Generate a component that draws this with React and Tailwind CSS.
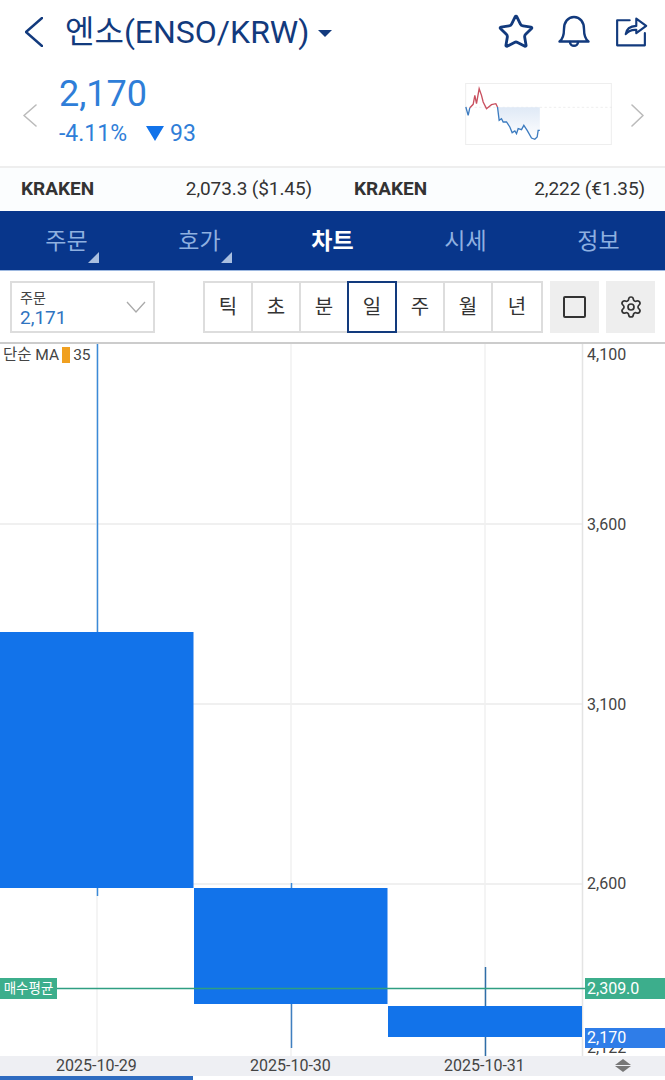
import { Settings, Star } from 'lucide-react';

const tabs = [
  { label: '주문', corner: true },
  { label: '호가', corner: true },
  { label: '차트', active: true },
  { label: '시세' },
  { label: '정보' },
];

const periods = ['틱', '초', '분', '일', '주', '월', '년'];

const yLabels = [
  { label: '4,100', cls: 'top-[2px]' },
  { label: '3,600', cls: 'top-[172px]' },
  { label: '3,100', cls: 'top-[352px]' },
  { label: '2,600', cls: 'top-[531px]' },
];

function Chevron({ dir, width, height, color, stroke }) {
  const points = dir === 'left'
    ? `${width - 1},1 1,${height / 2} ${width - 1},${height - 1}`
    : `1,1 ${width - 1},${height / 2} 1,${height - 1}`;
  return (
    <svg width={width} height={height} viewBox={`0 0 ${width} ${height}`} fill="none" stroke={color} strokeWidth={stroke} strokeLinecap="round" strokeLinejoin="round" className="shrink-0">
      <polyline points={points} />
    </svg>
  );
}

function Bell() {
  return (
    <svg width="34" height="34" viewBox="0 0 34 34" fill="none" stroke="#123a7d" strokeWidth="2.4" strokeLinejoin="round" strokeLinecap="round">
      <path d="M2.5 26.5C6 24 7 20 7 14C7 7 11 2 17 2C23 2 27 7 27 14C27 20 28 24 31.5 26.5Z" />
      <path d="M13 27C13 32 21 32 21 27" />
    </svg>
  );
}

function Share() {
  return (
    <svg width="35" height="33" viewBox="525 40 105 100" fill="none" stroke="#123a7d" strokeWidth="6.5" strokeLinejoin="round" strokeLinecap="round">
      <path d="M572 53H534V129H618V92" />
      <path d="M560 95C562 80 575 71 592 70V48L622 70L592 92V82C580 81 568 85 560 95Z" />
    </svg>
  );
}

function Sparkline() {
  return (
    <svg width="147" height="62" viewBox="76 248 440 186" className="mt-[-3px]">
      <defs>
        <linearGradient id="spark" x1="0" y1="0" x2="0" y2="1">
          <stop offset="0" stopColor="#dfe9f6" />
          <stop offset="1" stopColor="#ffffff" />
        </linearGradient>
      </defs>
      <rect x="77.5" y="249.5" width="437" height="183" fill="none" stroke="#eeeeee" strokeWidth="3" />
      <line x1="76" y1="321" x2="516" y2="321" stroke="#e6e6e6" strokeWidth="2" strokeDasharray="7 7" />
      <polygon fill="url(#spark)" points="173,321 178,360 185,355 190,365 200,365 210,380 217,397 225,392 230,400 235,385 245,388 252,375 262,390 275,413 285,417 292,410 295,390 300,390 300,321" />
      <polyline fill="none" stroke="#3d7cc0" strokeWidth="4" points="78,320 85,345 90,322" />
      <polyline fill="none" stroke="#c9505f" strokeWidth="4" points="90,322 100,312 105,285 110,310 118,265 125,285 130,305 140,325 155,313 168,310 173,320" />
      <polyline fill="none" stroke="#3d7cc0" strokeWidth="4" points="173,320 178,360 185,355 190,365 200,365 210,380 217,397 225,392 230,400 235,385 245,388 252,375 262,390 275,413 285,417 292,410 295,390 300,390" />
    </svg>
  );
}

function ChartCanvas() {
  // y here is screen y minus 344
  return (
    <svg width="665" height="712" viewBox="0 0 665 712" className="absolute inset-0">
      {[180, 360, 540].map((y) => (
        <line key={y} x1="0" y1={y} x2="582" y2={y} stroke="#f0f0f0" strokeWidth="2" />
      ))}
      {[97, 291, 485].map((x) => (
        <line key={x} x1={x} y1="0" x2={x} y2="712" stroke="#f0f0f0" strokeWidth="1.5" />
      ))}
      <line x1="582.5" y1="0" x2="582.5" y2="712" stroke="#e4e4e4" strokeWidth="1.5" />

      <line x1="97.5" y1="0" x2="97.5" y2="288" stroke="#3b8ad8" strokeWidth="1.5" />
      <line x1="97.5" y1="544" x2="97.5" y2="552" stroke="#3b8ad8" strokeWidth="1.5" />
      <line x1="291.5" y1="539" x2="291.5" y2="544" stroke="#3b8ad8" strokeWidth="1.5" />
      <line x1="291.5" y1="660" x2="291.5" y2="704" stroke="#3f7fc0" strokeWidth="1.5" />
      <line x1="485.5" y1="623" x2="485.5" y2="712" stroke="#2f6ea8" strokeWidth="1.5" />

      <rect x="0" y="288" width="193.5" height="256" fill="#1273ea" />
      <rect x="194" y="544" width="193.5" height="116" fill="#1273ea" />
      <rect x="388" y="662" width="194" height="31" fill="#1273ea" />

      <line x1="57" y1="644.5" x2="585" y2="644.5" stroke="#2f9e82" strokeWidth="1.5" />
    </svg>
  );
}

export default function App() {
  return (
    <div className="w-[665px] h-[1080px] overflow-hidden bg-white [font-family:Roboto,'Noto_Sans_CJK_KR',sans-serif]">
      {/* title bar */}
      <div className="h-[64px] flex items-center pl-[25px] pr-[16px] text-[#123a7d]">
        <Chevron dir="left" width={18} height={30} color="#123a7d" stroke={2.4} />
        <span className="ml-[22px] text-[32px] leading-none whitespace-nowrap">엔소(ENSO/KRW)</span>
        <span className="ml-[9px] mt-[2px] w-0 h-0 border-x-[7px] border-x-transparent border-t-[7px] border-t-[#123a7d]" />
        <div className="ml-auto flex items-center gap-[23px]">
          <Star size={38} strokeWidth={1.8} className="mr-[-1px]" />
          <Bell />
          <Share />
        </div>
      </div>

      {/* price */}
      <div className="h-[104px] flex items-center pl-[23px] pr-[21px] border-b-2 border-[#eeeeee]">
        <Chevron dir="left" width={14} height={23} color="#bbbbbb" stroke={1.6} />
        <div className="ml-[22px] mt-[-11px] text-[#2f7ed8]">
          <div className="text-[36px] leading-[42px]">2,170</div>
          <div className="flex items-center text-[23px] leading-[26px] mt-[6px]">
            <span>-4.11%</span>
            <span className="ml-[19px] mr-[6px] w-0 h-0 border-x-[9px] border-x-transparent border-t-[15px] border-t-[#1273ea]" />
            <span>93</span>
          </div>
        </div>
        <div className="ml-auto flex items-center gap-[19px]">
          <Sparkline />
          <Chevron dir="right" width={13} height={23} color="#bbbbbb" stroke={1.6} />
        </div>
      </div>

      {/* exchanges */}
      <div className="h-[43px] grid grid-cols-2 gap-x-[42px] items-center pl-[21px] pr-[20px] bg-[#fbfdfe] text-[#333333]">
        <div className="flex items-center justify-between">
          <span className="text-[19px] font-bold">KRAKEN</span>
          <span className="text-[19px] tracking-[-0.1px]">2,073.3 ($1.45)</span>
        </div>
        <div className="flex items-center justify-between">
          <span className="text-[19px] font-bold">KRAKEN</span>
          <span className="text-[19px] tracking-[-0.1px]">2,222 (€1.35)</span>
        </div>
      </div>

      {/* tabs */}
      <div className="h-[60px] grid grid-cols-5 bg-[#08368b] border-b border-[#9db8e0]">
        {tabs.map((tab) => (
          <div key={tab.label} className={`relative flex items-center justify-center pt-[3px] text-[23px] ${tab.active ? 'font-bold text-white' : 'text-[#8fb0e0]'}`}>
            {tab.label}
            {tab.corner && (
              <span className="absolute left-[88px] top-[41px] w-0 h-0 border-l-[11px] border-l-transparent border-b-[11px] border-b-[#a9bfe0]" />
            )}
          </div>
        ))}
      </div>

      {/* toolbar */}
      <div className="h-[73px] flex items-center pl-[10px] border-b-2 border-[#cccccc]">
        <div className="w-[145px] h-[52px] border-2 border-[#dddddd] pl-[8px] flex items-center justify-between pr-[7px]">
          <div className="pt-[6px]">
            <div className="text-[14px] leading-[16px] text-[#444444]">주문</div>
            <div className="text-[19px] leading-[23px] text-[#2f74c0]">2,171</div>
          </div>
          <svg width="20" height="12" viewBox="0 0 20 12" fill="none" stroke="#aaaaaa" strokeWidth="1.3">
            <polyline points="1,1 10,11 19,1" />
          </svg>
        </div>
        <div className="ml-[48px] w-[340px] h-[52px] grid grid-cols-7 border-2 border-[#dddddd] text-[20px] text-[#333333]">
          {periods.map((p, i) => (
            <div
              key={p}
              className={`relative flex items-center justify-center ${i < 6 ? 'border-r-2 border-[#dddddd]' : ''}`}
            >
              {p}
              {p === '일' && <span className="absolute inset-y-[-2px] left-[-2px] right-[-2px] border-2 border-[#123a7d]" />}
            </div>
          ))}
        </div>
        <div className="ml-[7px] w-[49px] h-[52px] bg-[#eeeeee] flex items-center justify-center">
          <span className="w-[23px] h-[22px] border-2 border-[#333333] rounded-[2px]" />
        </div>
        <div className="ml-[7px] w-[49px] h-[52px] bg-[#eeeeee] flex items-center justify-center">
          <Settings size={24} strokeWidth={1.7} className="text-[#333333]" />
        </div>
      </div>

      {/* chart */}
      <div className="relative h-[712px]">
        <ChartCanvas />
        <div className="absolute left-[3px] top-[2px] flex items-center text-[15.5px] leading-[18px] text-[#444444]">
          단순 MA
          <span className="ml-[3px] mr-[3px] w-[8px] h-[16px] bg-[#f0a020]" />
          35
        </div>
        {yLabels.map((y) => (
          <div key={y.label} className={`absolute left-[587px] text-[16px] leading-[18px] text-[#444444] ${y.cls}`}>
            {y.label}
          </div>
        ))}
        <div className="absolute left-0 top-[634px] w-[57px] h-[21px] bg-[#3cae8c] text-white text-[13.5px] leading-[21px] text-center whitespace-nowrap">매수평균</div>
        <div className="absolute left-[585px] top-[634px] w-[80px] h-[21px] bg-[#3cae8c] text-white text-[16px] leading-[21px] pl-[2px]">2,309.0</div>
        <div className="absolute left-[587px] top-[695px] text-[16px] leading-[18px] text-[#444444]">2,122</div>
        <div className="absolute left-[585px] top-[684px] w-[80px] h-[20px] bg-[#2f7de8] text-white text-[16px] leading-[20px] pl-[2px]">2,170</div>
      </div>

      {/* date axis */}
      <div className="relative h-[20px] bg-[#eeeff3] text-[16px] leading-[20px] text-[#444444]">
        <span className="absolute left-[56px]">2025-10-29</span>
        <span className="absolute left-[250px]">2025-10-30</span>
        <span className="absolute left-[444px]">2025-10-31</span>
        <span className="absolute left-[615px] top-[3px] flex flex-col gap-[1px]">
          <span className="w-0 h-0 border-x-[8px] border-x-transparent border-b-[6px] border-b-[#777777]" />
          <span className="w-0 h-0 border-x-[8px] border-x-transparent border-t-[6px] border-t-[#777777]" />
        </span>
      </div>
      <div className="w-[193px] h-[4px] bg-[#2e6bc0]" />
    </div>
  );
}
